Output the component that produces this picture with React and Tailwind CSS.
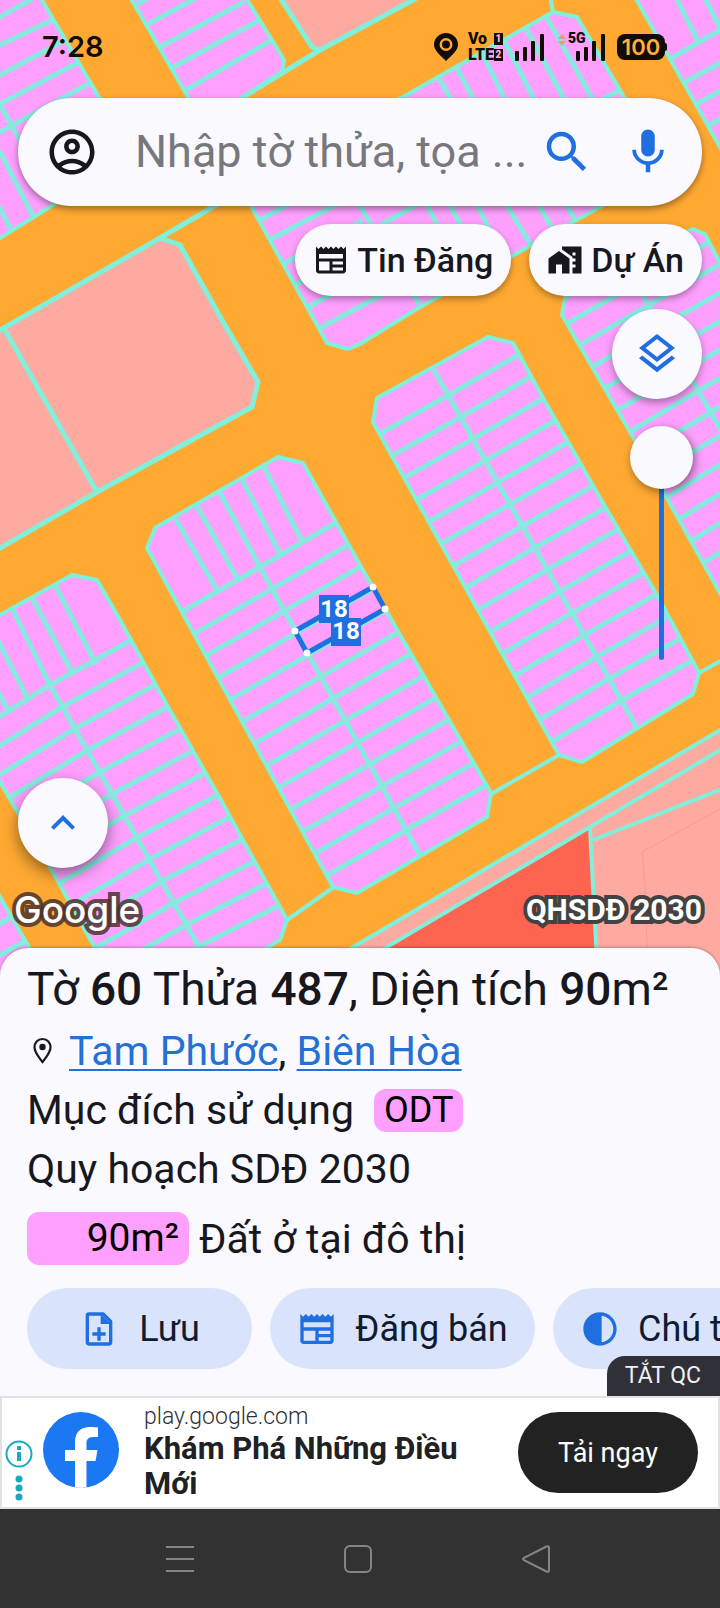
import React, { useState } from 'react';
import {
  MdOutlineAccountCircle,
  MdSearch,
  MdMic,
  MdNewspaper,
  MdHomeWork,
  MdOutlineLayers,
  MdKeyboardArrowUp,
  MdContrast,
} from 'react-icons/md';

const ROAD = '#ffa932';
const PLOT = '#ffa0ff';
const SALMON = '#ffaaa0';
const EDGE = '#80f0da';

// Every block is an outline plus rows of lots. rows holds the first and last
// point of each column edge (left, middle, right).
const blocks = [
  {
    id: 'east',
    outline: '377,398 373,422 559,755 582,762 693,694 699,673 657,595 607,510 543,398 513,343 488,337',
    rows: { count: 15, columns: [[[383, 432], [556, 739]], [[447, 396], [622, 700]], [[518, 355], [688, 663]]] },
    lines: 'M435 372 L636 726',
  },
  {
    id: 'center',
    outline: '155,528 147,548 188,623 333,887 357,893 487,817 491,793 403,640 360,565 303,463 278,457',
    rows: { count: 13, columns: [[[185, 610], [333, 872]], [[260, 567], [408, 829]], [[337, 522], [483, 787]]] },
    lines: 'M260 567 L420 855 M175 518 L217 590 M197 506 L237 578 M220 493 L260 567 M243 481 L280 554 M265 469 L302 541',
  },
  {
    id: 'west',
    outline: '-50,643 0,615 72,575 97,580 120,620 167,705 217,793 287,920 280,940 263,950 150,1015 110,975 50,867 0,782 -60,680',
    rows: { count: 13, columns: [[[-22, 730], [122, 990]], [[50, 685], [200, 946]], [[128, 642], [280, 905]]] },
    lines: 'M50 685 L215 975 M55 585 L95 662 M32 598 L72 672 M12 608 L50 685 M-6 633 L28 699 M-10 678 L9 711',
  },
  {
    id: 'south-west',
    outline: '-20,862 0,897 45,975 -20,990',
    lines: 'M-10 930 L11 917 M-10 960 L26 941',
  },
  {
    id: 'north-west',
    outline: '-10,-10 36,-10 130,150 124,166 53,205 0,238 -10,244',
    lines: 'M0 17 L30 0 M0 45 L52 20 M0 75 L65 40 M0 104 L79 62 M0 132 L90 83 M-4 98 L53 198 M0 152 L33 216 M0 208 L12 232',
  },
  {
    id: 'north',
    outline: '126,-10 188,97 200,112 222,110 282,72 284,60 240,-12',
    lines: 'M134 6 L146 -1 M148 24 L194 -1 M160 47 L242 3 M173 67 L258 21 M186 90 L270 41',
  },
  {
    id: 'north-center',
    outline: '553,12 577,17 658,155 655,172 600,207 420,307 360,344 348,349 327,343 251,206 240,188 245,175 403,97',
    lines:
      'M440 80 L480 150 M458 70 L500 150 M483 55 L530 150 M505 42 L560 150 M527 30 L586 140 M547 18 L610 130 ' +
      'M623 88 L370 231 M404 160 L445 240 M424 160 L475 250 M449 150 L505 260 M473 150 L531 245 M507 150 L556 235 M537 150 L576 222 ' +
      'M335 165 L421 307 M260 220 L300 198 M273 238 L345 200 M285 263 L360 222 M297 284 L370 244 M310 306 L385 265 M322 327 L398 286',
  },
  {
    id: 'north-east',
    outline: '631,-10 720,147 740,180 740,-10',
    lines: 'M675 -4 L698 41 M704 -4 L722 32 M668 60 L722 29 M683 83 L722 62 M697 104 L722 90 M708 126 L722 118',
  },
  {
    id: 'far-east',
    outline: '565,298 562,315 633,437 668,500 720,593 780,700 780,340 720,263 705,234 693,229 640,254',
    rows: { count: 12, columns: [[[570, 322], [708, 560]], [[637, 283], [772, 520]], [[702, 246], [837, 483]]] },
    lines: 'M640 290 L780 533',
  },
];

// Both ends run past the outline, the clip path trims them.
function rowPath({ count, columns }) {
  const parts = [];
  for (let i = 0; i < count; i++) {
    const t = i / (count - 1);
    const pts = columns.map(([a, b]) => [a[0] + (b[0] - a[0]) * t, a[1] + (b[1] - a[1]) * t]);
    const [left, , right] = pts;
    parts.push(
      'M' + [[left[0] - 18, left[1] + 10], ...pts, [right[0] + 18, right[1] - 10]].map((p) => p.join(' ')).join(' L')
    );
  }
  return parts.join(' ');
}

function ParcelMap() {
  return (
    <svg
      className="absolute inset-0 w-full h-full"
      viewBox="0 0 720 976"
      preserveAspectRatio="xMidYMin slice"
      aria-hidden="true"
    >
      <rect x="-400" width="1520" height="1400" fill={ROAD} />

      {/* Salmon land on the left and at the top */}
      <g fill={SALMON} stroke={EDGE} strokeWidth="5">
        <polygon points="-10,336 160,238 180,245 222,320 258,382 252,407 97,492 -10,554" />
        <path d="M5 330 L97 492 M160 238 L240 191" fill="none" />
        <polygon points="275,-10 312,47 320,50 413,0 430,-10" />
        <path d="M240 99 L320 50" fill="none" />
      </g>

      {/* South-east corner */}
      <polygon points="730,724 340,955 300,1000 730,1000" fill={SALMON} />
      <polygon points="590,828 593,887 598,1000 300,1000 385,948" fill="#ff6450" />
      <path d="M722 808 L642 852 L645 885 L648 980" fill="none" stroke="#f59b94" strokeWidth="1" />
      <g fill="none" stroke={EDGE} strokeWidth="4">
        <path d="M722 729 L345 952 M722 749 L590 827 L375 954 M593 840 L722 789 M590 827 L593 887 L598 980" />
        <path d="M559 755 L491 794 M334 887 L287 920 M699 673 L722 660 M550 -4 L553 12" />
      </g>

      {blocks.map((b) => (
        <g key={b.id}>
          <clipPath id={`clip-${b.id}`}>
            <polygon points={b.outline} />
          </clipPath>
          <polygon points={b.outline} fill={PLOT} />
          <g fill="none" stroke="#86ebdf" strokeWidth="5" clipPath={`url(#clip-${b.id})`}>
            {b.rows && <path d={rowPath(b.rows)} />}
            <path d={b.lines} strokeLinecap="square" />
          </g>
          <polygon points={b.outline} fill="none" stroke={EDGE} strokeWidth="4" strokeLinejoin="round" />
        </g>
      ))}

      {/* Selected parcel */}
      <polygon points="295,631 373,587 385,609 307,653" fill="none" stroke="#1f6fe0" strokeWidth="5" />
      <g fill="#1f6fe0">
        <rect x="319" y="595" width="30" height="28" />
        <rect x="331" y="618" width="30" height="28" />
      </g>
      <g fill="#fff" fontFamily="Roboto, sans-serif" fontSize="24" fontWeight="700" textAnchor="middle">
        <text x="334" y="617">18</text>
        <text x="346" y="639">18</text>
      </g>
      <g fill="#fff">
        <circle cx="295" cy="631" r="3.5" />
        <circle cx="373" cy="587" r="3.5" />
        <circle cx="385" cy="609" r="3.5" />
        <circle cx="307" cy="653" r="3.5" />
      </g>
    </svg>
  );
}

function NoteAddIcon({ size, className }) {
  return (
    <svg width={size} height={size} viewBox="0 0 24 24" className={className} aria-hidden="true">
      <path
        d="M14.500 3H6Q5 3 5 4V20Q5 21 6 21H18Q19 21 19 20V7.500Z"
        fill="none"
        stroke="currentColor"
        strokeWidth="2"
        strokeLinejoin="round"
      />
      <path d="M13 3v6h6ZM11 11h2v3h3v2h-3v3h-2v-3H8v-2h3Z" fill="currentColor" />
    </svg>
  );
}

function SignalBars() {
  return (
    <svg width="29" height="27" viewBox="0 0 29 27" fill="#120c06" aria-hidden="true">
      <rect x="0" y="17" width="4" height="10" rx="1" />
      <rect x="8" y="13" width="4" height="14" rx="1" />
      <rect x="16" y="7" width="4" height="20" rx="1" />
      <rect x="25" y="0" width="4" height="27" rx="1" />
    </svg>
  );
}

function StatusBar() {
  return (
    <div className="flex items-center h-[94px] pl-[42px] pr-[53px] text-[#120c06]">
      <span className="font-[Inter,sans-serif] text-[29px] leading-8 font-semibold">7:28</span>
      <div className="ml-auto flex items-center">
        <svg width="24" height="28" viewBox="0 0 24 28" aria-hidden="true">
          <path d="M12 0C5.400 0 0 5.200 0 11.600 0 17.500 6 22 12 28c6-6 12-10.500 12-16.400C24 5.200 18.600 0 12 0Z" fill="#120c06" />
          <circle cx="12" cy="11.500" r="5.200" fill="none" stroke={ROAD} strokeWidth="2.500" />
        </svg>
        <div className="ml-[10px] text-base leading-4 font-black">
          <div className="flex items-center justify-between">
            Vo <span className="bg-[#120c06] text-[#ffb0e8] text-[10px] leading-[12px] w-[9px] text-center">1</span>
          </div>
          <div className="flex items-center">
            LTE<span className="bg-[#120c06] text-[#ffb0e8] text-[10px] leading-[12px] w-[9px] text-center">2</span>
          </div>
        </div>
        <div className="ml-3">
          <SignalBars />
        </div>
        <div className="relative ml-8">
          <span className="absolute -left-2 -top-1 text-[14px] leading-4 font-black">5G</span>
          <svg className="absolute -left-[18px] top-0" width="8" height="12" viewBox="0 0 8 12" fill="#d9a078" aria-hidden="true">
            <path d="M0 5 4 0l4 5ZM0 7l4 5 4-5Z" />
          </svg>
          <SignalBars />
        </div>
        <div className="ml-3 flex items-center">
          <span className="bg-[#120c06] text-[#ffb13c] rounded-lg w-12 h-[26px] flex items-center justify-center font-[Inter,sans-serif] text-[22px] leading-6 font-semibold">
            100
          </span>
          <span className="bg-[#120c06] w-[2px] h-2 rounded-r-sm" />
        </div>
      </div>
    </div>
  );
}

function SearchBar() {
  return (
    <form
      className="mx-[18px] mt-1 h-[108px] rounded-full bg-[#faf9ff] shadow-[0_3px_7px_rgba(0,0,0,0.4)] flex items-center px-[27px]"
      onSubmit={(e) => e.preventDefault()}
    >
      <button type="button" aria-label="Tài khoản" className="shrink-0 text-[#17181d]">
        <MdOutlineAccountCircle size={54} />
      </button>
      <input
        type="text"
        aria-label="Tìm kiếm"
        placeholder="Nhập tờ thửa, tọa ..."
        className="flex-1 min-w-0 ml-[36px] bg-transparent outline-none text-[45px] leading-[54px] text-[#17181d] placeholder:text-[#77777c]"
      />
      <button type="submit" aria-label="Tìm" className="shrink-0 text-[#1f6fe0]">
        <MdSearch size={54} />
      </button>
      <button type="button" aria-label="Giọng nói" className="shrink-0 ml-[27px] text-[#1f6fe0]">
        <MdMic size={54} />
      </button>
    </form>
  );
}

function FilterChip({ icon: Icon, label }) {
  return (
    <button className="h-[72px] px-[18px] rounded-full bg-[#faf9ff] shadow-[0_3px_7px_rgba(0,0,0,0.35)] flex items-center gap-2 text-[#17181d] text-[34px] leading-10 font-medium">
      <Icon size={36} />
      {label}
    </button>
  );
}

function ActionButton({ icon: Icon, label, className }) {
  return (
    <button
      className={`shrink-0 h-[81px] rounded-full bg-[#d9e3fb] flex items-center justify-center text-[#101b30] text-[36px] leading-[42px] ${className}`}
    >
      <Icon size={40} className="text-[#1f6fe0]" />
      {label}
    </button>
  );
}

function AdBanner() {
  return (
    <div className="relative flex items-center h-[113px] border-2 border-[#e2e2e6] bg-white pl-[3px] pr-5">
      <button className="absolute -right-[2px] bottom-full z-10 mb-[2px] h-10 pl-[18px] pr-[19px] rounded-tl-[18px] bg-[#2f3038] text-[#f1f0f7] text-[23px] leading-7">
        TẮT QC
      </button>
      <svg className="shrink-0 mt-[36px]" width="28" height="62" viewBox="0 0 28 62" aria-hidden="true">
        <circle cx="14" cy="14" r="12.500" fill="none" stroke="#17a9bd" strokeWidth="2" />
        <path d="M12 12h4v9h-4ZM12 6h4v4h-4Z" fill="#17a9bd" />
        <g fill="#17a9bd">
          <circle cx="14" cy="39" r="3.500" />
          <circle cx="14" cy="48" r="3.500" />
          <circle cx="14" cy="57" r="3.500" />
        </g>
      </svg>
      <div className="flex-1 min-w-0 ml-[10px] flex items-center">
        <svg className="shrink-0 mb-[5px]" width="76" height="76" viewBox="0 0 76 76" aria-hidden="true">
          <clipPath id="fb-disc">
            <circle cx="38" cy="38" r="38" />
          </clipPath>
          <circle cx="38" cy="38" r="38" fill="#1b77f2" />
          <path
            clipPath="url(#fb-disc)"
            fill="#fff"
            d="M32 76V49H22V38H32V30C32 20 38 15 47 15c3 0 6 .2 8 .6V25H50c-5 0-6.500 3-6.500 6v7H54.500L52.500 49H43.500V76Z"
          />
        </svg>
        <div className="ml-[25px] flex-1 min-w-0 pb-[2px]">
          <div className="text-[23px] leading-7 font-light text-[#303134]">play.google.com</div>
          <div className="text-[31px] leading-[35px] font-bold text-[#202124]">Khám Phá Những Điều Mới</div>
        </div>
      </div>
      <a
        href="#install"
        className="shrink-0 ml-4 w-[180px] h-[81px] rounded-full bg-[#222222] text-white text-[27px] leading-8 flex items-center justify-center"
      >
        Tải ngay
      </a>
    </div>
  );
}

function SystemNav() {
  return (
    <nav className="h-[99px] pr-1 bg-[#323232] flex items-center justify-center gap-[150px] text-[#858585]">
      <button aria-label="Gần đây">
        <svg width="28" height="28" viewBox="0 0 28 28" stroke="currentColor" strokeWidth="2">
          <path d="M0 2h28M0 14h28M0 26h28" />
        </svg>
      </button>
      <button aria-label="Trang chủ">
        <svg width="28" height="28" viewBox="0 0 28 28" fill="none" stroke="currentColor" strokeWidth="2">
          <rect x="1" y="1" width="26" height="26" rx="5" />
        </svg>
      </button>
      <button aria-label="Quay lại">
        <svg width="28" height="28" viewBox="0 0 28 28" fill="none" stroke="currentColor" strokeWidth="2">
          <path d="M24.500 1.500 2 12.800q-2 1.200 0 2.400L24.500 26.500q2.500 1 2.500-1.500V3q0-2.500-2.500-1.500Z" />
        </svg>
      </button>
    </nav>
  );
}

export default function App() {
  const [opacity, setOpacity] = useState(0);

  return (
    <div className="min-h-screen flex flex-col bg-[#faf9ff] font-[Roboto,sans-serif] overflow-x-hidden">
      <main className="relative flex-1 flex flex-col">
        <ParcelMap />

        <div className="relative flex-1 flex flex-col pb-11">
          <StatusBar />
          <SearchBar />
          <div className="mt-[18px] mx-[18px] flex justify-end gap-[18px]">
            <FilterChip icon={MdNewspaper} label="Tin Đăng" />
            <FilterChip icon={MdHomeWork} label="Dự Án" />
          </div>
          <div className="mt-[13px] mr-[18px] flex flex-col items-end">
            <button
              aria-label="Lớp bản đồ"
              className="w-[90px] h-[90px] rounded-full bg-[#faf9ff] shadow-[0_4px_9px_rgba(0,0,0,0.35)] flex items-center justify-center text-[#1f6fe0]"
            >
              <MdOutlineLayers size={48} />
            </button>
            <input
              type="range"
              aria-label="Độ mờ"
              min="0"
              max="100"
              value={opacity}
              onChange={(e) => setOpacity(Number(e.target.value))}
              className="mt-[27px] mr-[9px] w-[63px] h-[234px] appearance-none bg-transparent [writing-mode:vertical-lr] [&::-webkit-slider-runnable-track]:w-[5px] [&::-webkit-slider-runnable-track]:h-full [&::-webkit-slider-runnable-track]:rounded-full [&::-webkit-slider-runnable-track]:bg-[#1f6fe0] [&::-webkit-slider-thumb]:appearance-none [&::-webkit-slider-thumb]:w-[63px] [&::-webkit-slider-thumb]:h-[63px] [&::-webkit-slider-thumb]:-ml-[29px] [&::-webkit-slider-thumb]:rounded-full [&::-webkit-slider-thumb]:bg-[#faf9ff] [&::-webkit-slider-thumb]:shadow-[2px_3px_10px_rgba(0,0,0,0.45)]"
            />
          </div>

          <div className="mt-auto">
            <button
              aria-label="Mở rộng"
              className="ml-[18px] w-[90px] h-[90px] rounded-full bg-[#faf9ff] shadow-[0_6px_16px_rgba(0,0,0,0.45)] flex items-center justify-center text-[#1f6fe0]"
            >
              <MdKeyboardArrowUp size={48} />
            </button>
            <div className="mt-5 pl-[14px] pr-[18px] flex items-center justify-between text-white">
              <span className="font-[Inter,sans-serif] text-[37px] leading-[44px] font-medium [paint-order:stroke_fill] [-webkit-text-stroke:8px_rgba(75,50,45,0.85)]">
                Google
              </span>
              <span className="text-[30px] leading-8 font-bold [paint-order:stroke_fill] [-webkit-text-stroke:8px_#424242]">
                QHSDĐ 2030
              </span>
            </div>
          </div>
        </div>
      </main>

      <section className="relative -mt-7 rounded-t-[28px] bg-[#faf9ff] pt-[15px] pb-[27px] text-[#17181d] shadow-[0_-1px_3px_rgba(0,0,0,0.25)]">
        <div className="px-[27px] flex flex-col gap-[11px] text-[41px] leading-[48px]">
          <h1 className="text-[46px] leading-[53px]">
            Tờ <b className="font-medium">60</b> Thửa <b className="font-medium">487</b>, Diện tích{' '}
            <b className="font-medium">90</b>m²
          </h1>
          <div className="flex items-center gap-[14px]">
            <svg width="28" height="28" viewBox="0 0 28 28" fill="none" aria-hidden="true">
              <path d="M15.500 2C10.500 2 7.500 5.800 7.500 10.200 7.500 15.500 11.500 19.500 15.500 25c4-5.500 8-9.500 8-14.800C23.500 5.800 20.500 2 15.500 2Z" stroke="#17181d" strokeWidth="2.200" />
              <circle cx="15.500" cy="10" r="3.200" fill="#17181d" />
            </svg>
            <p>
              <a href="#tam-phuoc" className="text-[#2470d4] underline decoration-2 underline-offset-4">Tam Phước</a>,{' '}
              <a href="#bien-hoa" className="text-[#2470d4] underline decoration-2 underline-offset-4">Biên Hòa</a>
            </p>
          </div>
          <div className="flex items-center gap-5">
            <span>Mục đích sử dụng</span>
            <span className="h-[43px] px-[10px] rounded-xl bg-[#ffa0ff] text-black text-[36px] leading-[43px]">ODT</span>
          </div>
          <p>Quy hoạch SDĐ 2030</p>
        </div>
        <div className="mt-[19px] px-[27px] flex items-center gap-[10px] text-[41px] leading-[48px]">
          <span className="w-[162px] h-[53px] pr-[10px] rounded-xl bg-[#ffa0ff] text-black text-right text-[39px] leading-[53px]">
            90m²
          </span>
          <span>Đất ở tại đô thị</span>
        </div>
        <div className="mt-[23px] pl-[27px] flex gap-[18px] overflow-hidden">
          <ActionButton icon={NoteAddIcon} label="Lưu" className="w-[225px] gap-5" />
          <ActionButton icon={MdNewspaper} label="Đăng bán" className="w-[265px] gap-[18px]" />
          <ActionButton icon={MdContrast} label="Chú thích" className="px-[27px] gap-[18px]" />
        </div>
      </section>

      <AdBanner />
      <SystemNav />
    </div>
  );
}
